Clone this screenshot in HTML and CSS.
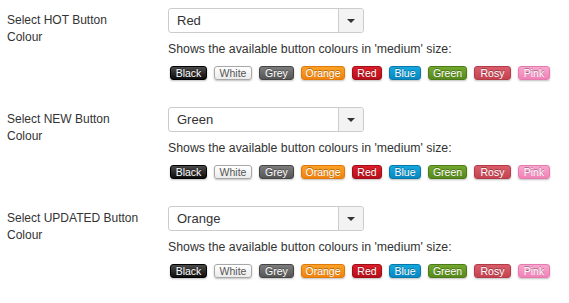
FILE: index.html
```html
<!DOCTYPE html>
<html lang="en">

<head>
    <meta charset="UTF-8">
    <title>Button Colours</title>
    <link rel="stylesheet" href="styles.css">
</head>

<body>
    <div class="form-row">
        <label class="row-label">Select HOT Button Colour</label>
        <div class="row-field">
            <div class="select-box">
                <span class="select-value">Red</span>
                <span class="select-arrow"><span class="caret"></span></span>
            </div>
            <p class="help">Shows the available button colours in 'medium' size:</p>
            <div class="swatches">
                <span class="btn btn-black">Black</span>
                <span class="btn btn-white">White</span>
                <span class="btn btn-grey">Grey</span>
                <span class="btn btn-orange">Orange</span>
                <span class="btn btn-red">Red</span>
                <span class="btn btn-blue">Blue</span>
                <span class="btn btn-green">Green</span>
                <span class="btn btn-rosy">Rosy</span>
                <span class="btn btn-pink">Pink</span>
            </div>
        </div>
    </div>
    <div class="form-row">
        <label class="row-label">Select NEW Button Colour</label>
        <div class="row-field">
            <div class="select-box">
                <span class="select-value">Green</span>
                <span class="select-arrow"><span class="caret"></span></span>
            </div>
            <p class="help">Shows the available button colours in 'medium' size:</p>
            <div class="swatches">
                <span class="btn btn-black">Black</span>
                <span class="btn btn-white">White</span>
                <span class="btn btn-grey">Grey</span>
                <span class="btn btn-orange">Orange</span>
                <span class="btn btn-red">Red</span>
                <span class="btn btn-blue">Blue</span>
                <span class="btn btn-green">Green</span>
                <span class="btn btn-rosy">Rosy</span>
                <span class="btn btn-pink">Pink</span>
            </div>
        </div>
    </div>
    <div class="form-row">
        <label class="row-label">Select UPDATED Button Colour</label>
        <div class="row-field">
            <div class="select-box">
                <span class="select-value">Orange</span>
                <span class="select-arrow"><span class="caret"></span></span>
            </div>
            <p class="help">Shows the available button colours in 'medium' size:</p>
            <div class="swatches">
                <span class="btn btn-black">Black</span>
                <span class="btn btn-white">White</span>
                <span class="btn btn-grey">Grey</span>
                <span class="btn btn-orange">Orange</span>
                <span class="btn btn-red">Red</span>
                <span class="btn btn-blue">Blue</span>
                <span class="btn btn-green">Green</span>
                <span class="btn btn-rosy">Rosy</span>
                <span class="btn btn-pink">Pink</span>
            </div>
        </div>
    </div>
</body>

</html>
```

FILE: styles.css
```css
body {
    font-family: 'Liberation Sans', Arial, sans-serif;
    font-size: 13px;
    color: #333;
    margin: 0;
    padding: 8px 0 0 7px;
    background-color: #fff;
}

.form-row {
    display: flex;
    height: 99px;
}

.row-label {
    width: 138px;
    flex: none;
    padding-top: 4px;
    font-size: 12px;
    line-height: 17px;
    margin-right: 23px;
}

.row-field {
    width: 400px;
}

.select-box {
    display: flex;
    width: 194px;
    height: 23px;
    border: 1px solid #ccc;
    border-radius: 3px;
    background-color: #fff;
    font-size: 13px;
}

.select-value {
    flex: 1;
    padding-left: 8px;
    line-height: 23px;
}

.select-arrow {
    width: 24px;
    border-left: 1px solid #ccc;
    background-color: #f3f3f3;
    border-radius: 0 3px 3px 0;
    display: flex;
    align-items: center;
    justify-content: center;
}

.caret {
    width: 0;
    height: 0;
    border-left: 4px solid transparent;
    border-right: 4px solid transparent;
    border-top: 4px solid #333;
}

.help {
    margin: 9px 0 0 0;
    font-size: 12.3px;
    line-height: 15px;
}

.swatches {
    display: flex;
    gap: 7px;
    margin-top: 9px;
    padding-left: 2px;
}

.btn {
    display: inline-block;
    box-sizing: border-box;
    height: 14px;
    font-size: 10.5px;
    line-height: 12px;
    border: 1px solid;
    border-radius: 3px;
    color: #fff;
    text-shadow: 0 -1px 0 rgba(0, 0, 0, 0.35);
    box-shadow: 0 1px 2px rgba(0, 0, 0, 0.25);
    text-align: center;
}

.btn-black {
    width: 37px;
    background: linear-gradient(#4a4a4a, #0d0d0d);
    border-color: #000;
}

.btn-white {
    width: 38px;
    background: linear-gradient(#fff, #ebebeb);
    border-color: #a8a8a8;
    color: #555;
    text-shadow: none;
}

.btn-grey {
    width: 35px;
    background: linear-gradient(#7c7c7c, #565656);
    border-color: #444;
}

.btn-orange {
    width: 44px;
    background: linear-gradient(#fca126, #f0830f);
    border-color: #df790c;
}

.btn-red {
    width: 30px;
    background: linear-gradient(#de1d2a, #b5101b);
    border-color: #a00e17;
}

.btn-blue {
    width: 32px;
    background: linear-gradient(#14a8de, #0a87c0);
    border-color: #0878ab;
}

.btn-green {
    width: 39px;
    background: linear-gradient(#72a82d, #57891d);
    border-color: #4d7a18;
}

.btn-rosy {
    width: 37px;
    background: linear-gradient(#da5c6b, #c54350);
    border-color: #b33b47;
}

.btn-pink {
    width: 32px;
    background: linear-gradient(#f8a6cd, #f083b7);
    border-color: #e47aad;
}
```
